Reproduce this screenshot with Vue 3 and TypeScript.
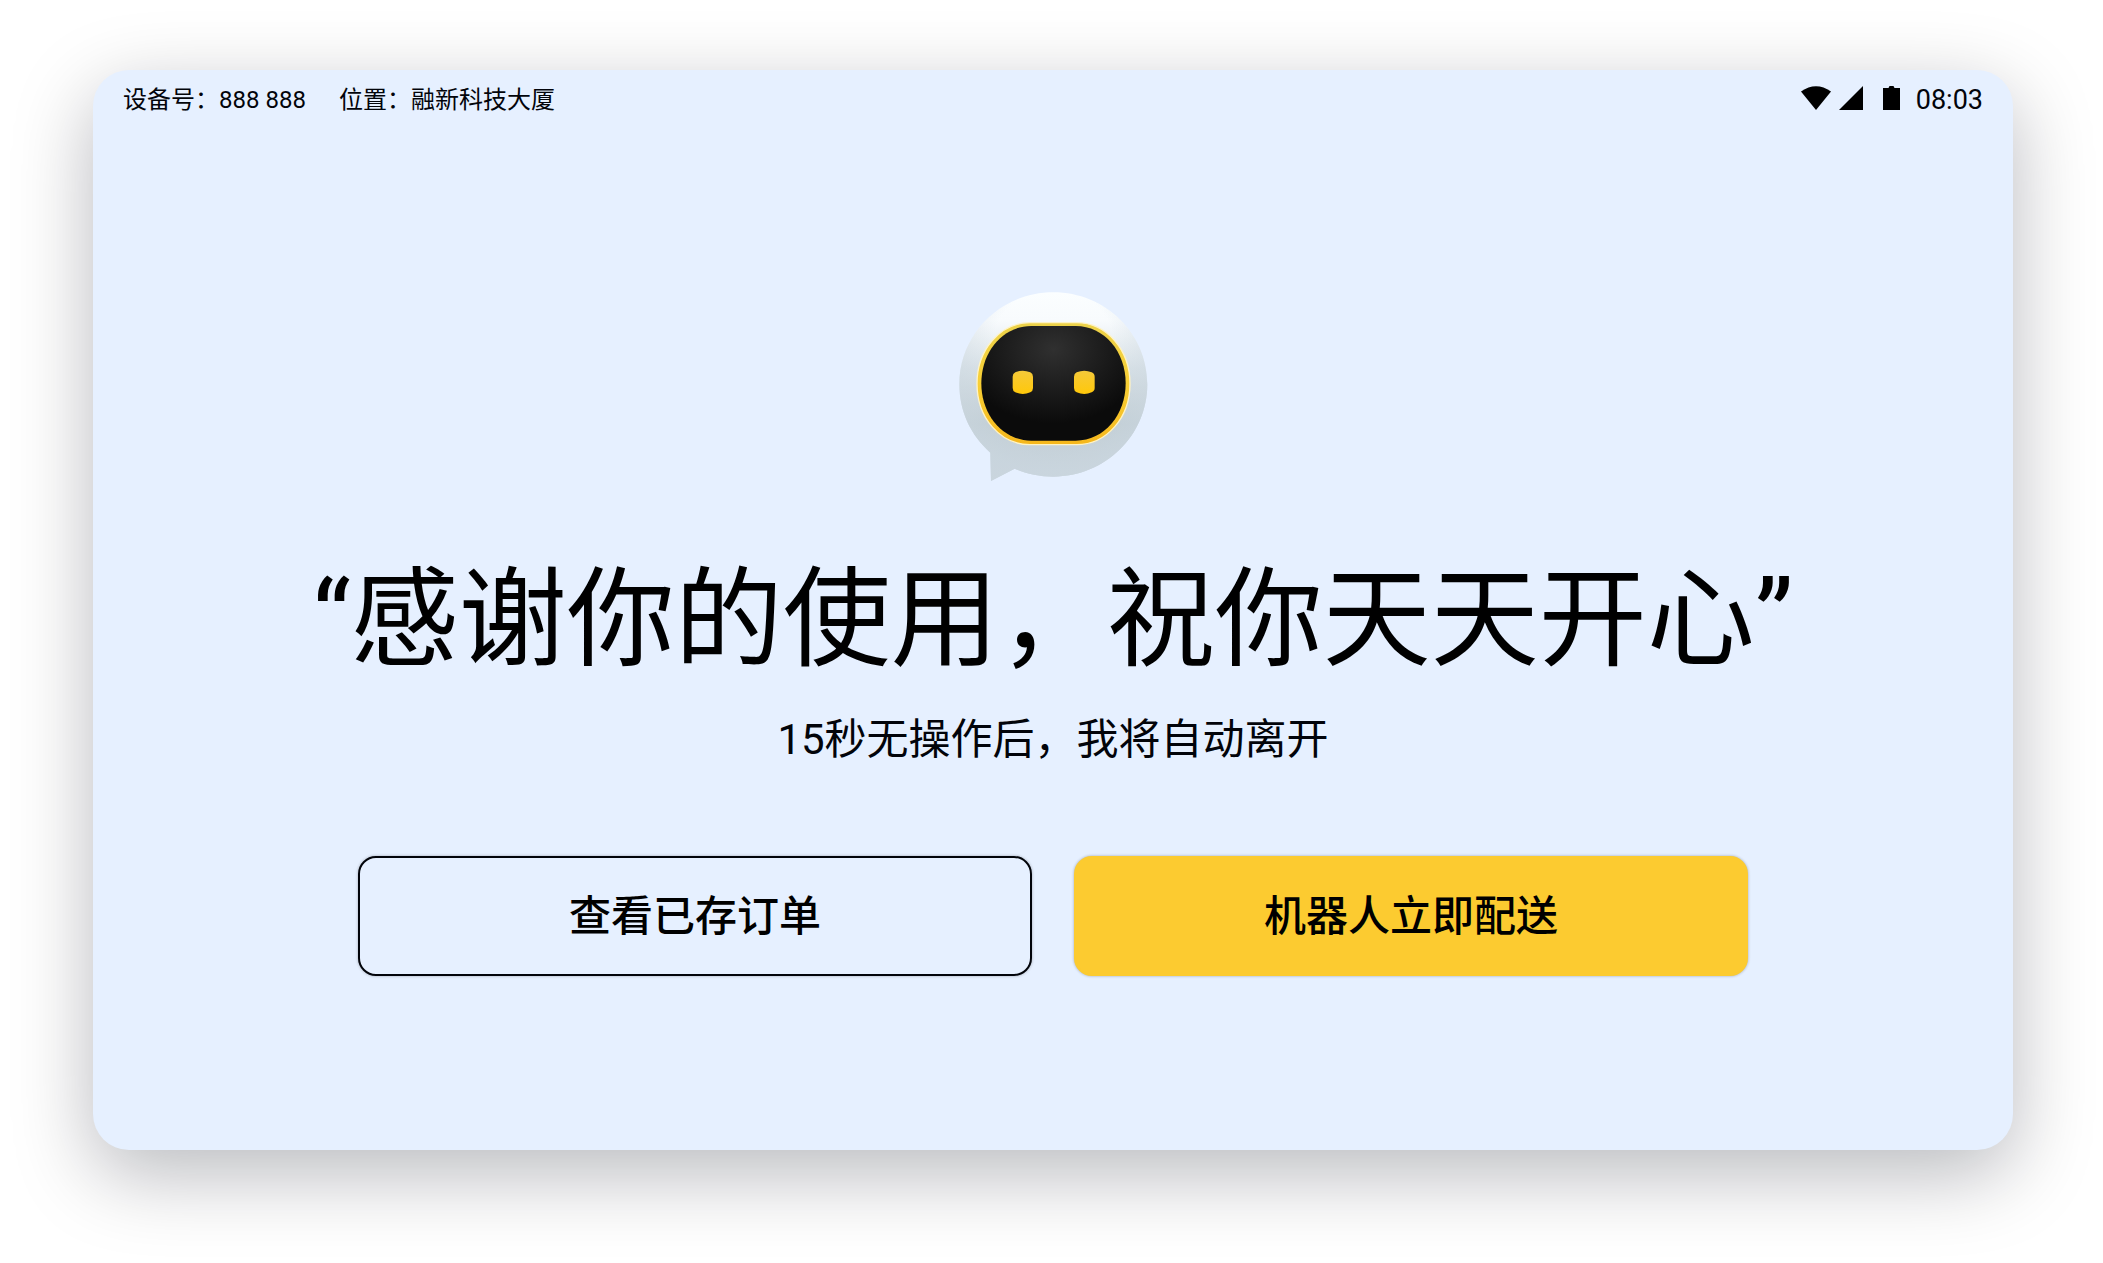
<script setup lang="ts">
import { ref } from 'vue'

const deviceNo = ref('888 888')
const location = ref('融新科技大厦')
const time = ref('08:03')
const seconds = ref(15)
</script>

<template>
  <div class="page">
    <main class="screen">
      <header class="status">
        <div class="info">
          <span>设备号：{{ deviceNo }}</span>
          <span>位置：{{ location }}</span>
        </div>
        <div class="system">
          <svg class="wifi" viewBox="0 0 30 24" aria-hidden="true">
            <path d="M0 5.5Q15-5 30 5.5L15 24Z" />
          </svg>
          <svg class="signal" viewBox="0 0 24 24" aria-hidden="true">
            <path d="M24 0V24H0Z" />
          </svg>
          <svg class="battery" viewBox="0 0 17 24" aria-hidden="true">
            <path d="M0 2H5.500L6.500 0H10.500L11.500 2H17V24H0Z" />
          </svg>
          <time class="clock">{{ time }}</time>
        </div>
      </header>

      <section class="content">
        <svg class="robot" viewBox="87 64 567 567" aria-hidden="true">
          <defs>
            <linearGradient id="shell" x1="0" y1="0" x2="0" y2="1">
              <stop offset="0" stop-color="#fbfeff" />
              <stop offset="0.15" stop-color="#f8fbfd" />
              <stop offset="0.4" stop-color="#d8e1e7" />
              <stop offset="0.7" stop-color="#bfcbd1" />
              <stop offset="1" stop-color="#c6d1d9" />
            </linearGradient>
            <radialGradient id="side" cx="0.5" cy="0.3" r="0.65">
              <stop offset="0.5" stop-color="#cbd7e0" stop-opacity="0" />
              <stop offset="1" stop-color="#cbd7e0" stop-opacity="0.7" />
            </radialGradient>
            <linearGradient id="rim" x1="0" y1="0" x2="0" y2="1">
              <stop offset="0" stop-color="#ecd24a" />
              <stop offset="0.5" stop-color="#f8cf35" />
              <stop offset="1" stop-color="#f5b71c" />
            </linearGradient>
            <radialGradient id="visor" cx="0.5" cy="0.2" r="0.65">
              <stop offset="0" stop-color="#303030" />
              <stop offset="1" stop-color="#0b0b0b" />
            </radialGradient>
            <linearGradient id="eye" x1="0" y1="0" x2="0" y2="1">
              <stop offset="0" stop-color="#f5c93a" />
              <stop offset="1" stop-color="#ffc80a" />
            </linearGradient>
          </defs>
          <path
            fill="url(#shell)"
            d="M370 65C526 65 652 188 652 341C652 494 526 618 370 618C329 618 289 609 254 594L183 631L181 546C123 495 88 422 88 341C88 188 214 65 370 65Z"
          />
          <path
            fill="url(#side)"
            d="M370 65C526 65 652 188 652 341C652 494 526 618 370 618C329 618 289 609 254 594L183 631L181 546C123 495 88 422 88 341C88 188 214 65 370 65Z"
          />
          <path
            fill="url(#rim)"
            stroke="#fff3c4"
            stroke-width="4"
            d="M300 156H440C530 156 600 238 600 339C600 441 530 522 440 522H300C210 522 141 441 141 339C141 238 210 156 300 156Z"
          />
          <path
            fill="url(#visor)"
            d="M304 166H437C523 166 587 243 587 338C587 433 523 510 437 510H304C218 510 154 433 154 338C154 243 218 166 304 166Z"
          />
          <g fill="url(#eye)">
            <path d="M248 318Q248 309 256 305Q278 295 301 305Q309 309 309 318V352Q309 361 301 365Q278 375 256 365Q248 361 248 352Z" />
            <path d="M432 318Q432 309 440 305Q463 295 485 305Q494 309 494 318V352Q494 361 485 365Q463 375 440 365Q432 361 432 352Z" />
          </g>
        </svg>

        <h1 class="title">“感谢你的使用，祝你天天开心”</h1>
        <p class="hint">{{ seconds }}秒无操作后，我将自动离开</p>

        <div class="actions">
          <button class="button outline" type="button">查看已存订单</button>
          <button class="button primary" type="button">机器人立即配送</button>
        </div>
      </section>
    </main>
  </div>
</template>

<style>
body {
  margin: 0;
  background: #fff;
}
</style>

<style scoped>
.page {
  box-sizing: border-box;
  display: flex;
  min-height: 100vh;
  padding: 70px 90px 113px 93px;
  background: #fff;
  color: #02040a;
  font-family: Roboto, "Noto Sans CJK SC", sans-serif;
}

.screen {
  display: flex;
  flex: 1;
  flex-direction: column;
  min-width: 0;
  border-radius: 36px;
  background: #e6f0ff;
  box-shadow: 0 24px 80px rgba(4, 8, 20, 0.28);
}

.status {
  display: flex;
  align-items: center;
  justify-content: space-between;
  height: 60px;
  padding: 0 30px;
}

.info {
  display: flex;
  gap: 33px;
  font-size: 24px;
  line-height: 36px;
}

.system {
  display: flex;
  align-items: center;
}

.system svg {
  height: 24px;
  margin-bottom: 4px;
  fill: #000;
}

.wifi {
  width: 30px;
  margin-right: 8px;
}

.signal {
  width: 24px;
  margin-right: 20px;
}

.battery {
  width: 17px;
  margin-right: 16px;
}

.clock {
  font-size: 27px;
  line-height: 36px;
}

.content {
  display: flex;
  flex-direction: column;
  align-items: center;
  padding: 162px 40px 0;
  text-align: center;
}

.robot {
  width: 189px;
  height: 189px;
}

.title {
  margin: 59px 0 0;
  color: #000;
  font-size: 108px;
  font-weight: 400;
  line-height: 160px;
}

.hint {
  margin: 10px 0 0;
  font-size: 42px;
  line-height: 60px;
}

.actions {
  display: flex;
  gap: 42px;
  width: 100%;
  max-width: 1390px;
  margin-top: 86px;
}

.button {
  flex: 1;
  box-sizing: border-box;
  height: 120px;
  padding: 2px 0 0;
  border: 2px solid #02040a;
  border-radius: 18px;
  color: #000;
  font-family: inherit;
  font-size: 42px;
  font-weight: 500;
  line-height: 60px;
  box-shadow: 0 0 3px rgba(0, 0, 0, 0.3);
}

.outline {
  background: #e6f0ff;
}

.primary {
  border-color: #fccb30;
  background: #fccb30;
}
</style>
